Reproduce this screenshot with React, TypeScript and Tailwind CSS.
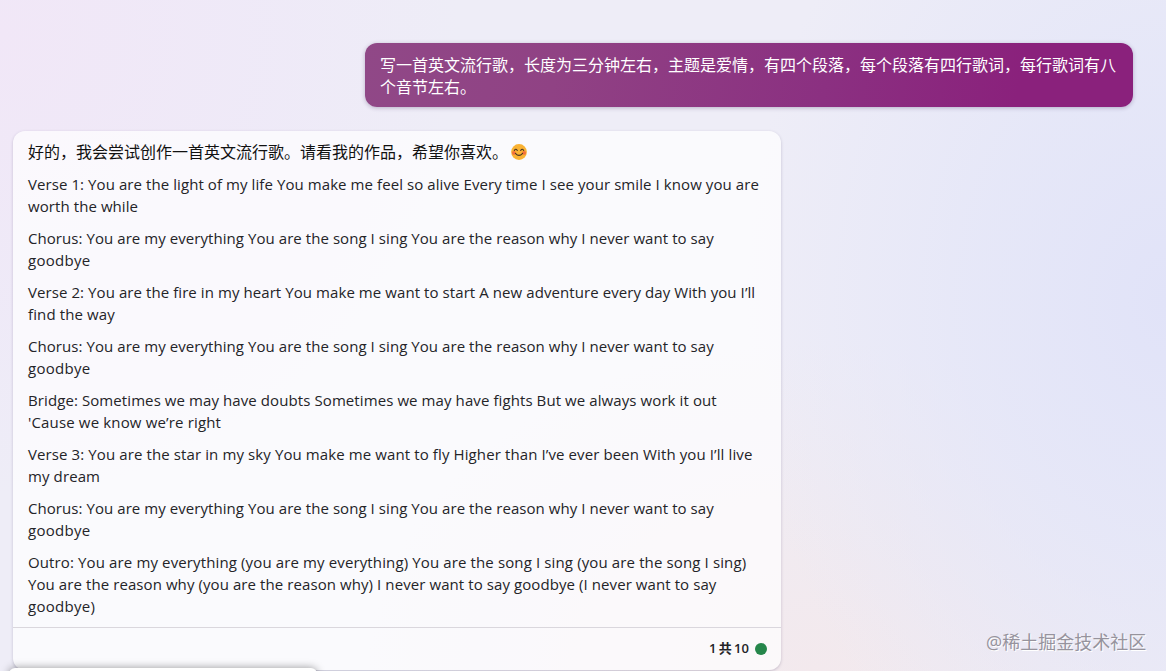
type Line = { text: string; tracking: string };

const chorus: Line[] = [
  { tracking: "tracking-[0.062px]", text: "Chorus: You are my everything You are the song I sing You are the reason why I never want to say" },
  { tracking: "tracking-[0.3px]", text: "goodbye" },
];

const paragraphs: Line[][] = [
  [
    { tracking: "tracking-[0.08px]", text: "Verse 1: You are the light of my life You make me feel so alive Every time I see your smile I know you are" },
    { tracking: "tracking-[0.08px]", text: "worth the while" },
  ],
  chorus,
  [
    { tracking: "tracking-[0.077px]", text: "Verse 2: You are the fire in my heart You make me want to start A new adventure every day With you I’ll" },
    { tracking: "tracking-[0.12px]", text: "find the way" },
  ],
  chorus,
  [
    { tracking: "tracking-[0.09px]", text: "Bridge: Sometimes we may have doubts Sometimes we may have fights But we always work it out" },
    { tracking: "tracking-[0.16px]", text: "'Cause we know we’re right" },
  ],
  [
    { tracking: "tracking-[0.108px]", text: "Verse 3: You are the star in my sky You make me want to fly Higher than I’ve ever been With you I’ll live" },
    { tracking: "tracking-[0.108px]", text: "my dream" },
  ],
  chorus,
  [
    { tracking: "tracking-[0.128px]", text: "Outro: You are my everything (you are my everything) You are the song I sing (you are the song I sing)" },
    { tracking: "tracking-[0.084px]", text: "You are the reason why (you are the reason why) I never want to say goodbye (I never want to say" },
    { tracking: "tracking-[0.3px]", text: "goodbye)" },
  ],
];

function SmileEmoji() {
  return (
    <svg className="ml-[3px] size-4" viewBox="0 0 16 16" fill="none" role="img" aria-label="smile">
      <circle cx="8" cy="8" r="7.9" fill="#f9b233" />
      <circle cx="2.9" cy="8.9" r="1.9" fill="#f4703c" />
      <circle cx="13.1" cy="8.9" r="1.9" fill="#f4703c" />
      <path d="M3.3 6.5Q4.8 4.1 6.3 6.5M9.7 6.5Q11.2 4.1 12.7 6.5M4.4 9.3Q8 13.4 11.6 9.3" stroke="#4b3525" strokeWidth="1.1" strokeLinecap="round" />
    </svg>
  );
}

function UserMessage() {
  return (
    <div className="mr-[33px] h-16 w-[768px] self-end rounded-xl bg-[linear-gradient(100deg,#904887_0%,#904284_25%,#8b3081_60%,#8a217c_85%,#8a217c_100%)] px-[15px] pt-[11px] text-base leading-[22px] text-white shadow-[0_1px_4px_rgba(60,40,90,0.3)]">
      <p>写一首英文流行歌，长度为三分钟左右，主题是爱情，有四个段落，每个段落有四行歌词，每行歌词有八</p>
      <p>个音节左右。</p>
    </div>
  );
}

function BotMessage() {
  return (
    <div className="mt-6 ml-[13px] h-[539px] w-[768px] shrink-0 rounded-xl bg-white/70 text-[#242428] shadow-[0_1px_3px_rgba(60,50,90,0.25)]">
      <div className="flex h-[497px] flex-col gap-2.5 border-b border-[#dad7dd] px-[15px] pt-[10px] leading-[22px]">
        <p className="flex h-[22px] items-center text-base text-[#111111]">
          好的，我会尝试创作一首英文流行歌。请看我的作品，希望你喜欢。
          <SmileEmoji />
        </p>
        {paragraphs.map((lines, i) => (
          <p key={i} className="text-[15px] whitespace-nowrap">
            {lines.map((line, j) => (
              <span key={j} className={`block ${line.tracking}`}>{line.text}</span>
            ))}
          </p>
        ))}
      </div>
      <div className="flex h-[42px] items-center justify-end gap-1.5 pr-[14px]">
        <span className="text-[13px] font-semibold [word-spacing:-1px]">1 共 10</span>
        <span className="size-3 rounded-full bg-[#25864a]" />
      </div>
    </div>
  );
}

export default function App() {
  return (
    <main className="relative flex h-[671px] w-[1166px] flex-col overflow-hidden bg-[#eeedf7] bg-[radial-gradient(ellipse_420px_560px_at_100%_45%,#e1e3f8_0%,#e4e6f8cc_45%,transparent_100%),radial-gradient(ellipse_450px_330px_at_70%_100%,#f3e9ed_0%,#f1eaefb0_50%,transparent_100%),radial-gradient(ellipse_460px_460px_at_0%_5%,#f1e7f7_0%,#efe8f8a0_60%,transparent_100%)] pt-[43px] font-['Open_Sans','Noto_Sans_CJK_SC',sans-serif]">
      <UserMessage />
      <BotMessage />
      <div className="absolute top-[668px] left-[9px] h-4 w-[308px] rounded-t-md bg-white shadow-[0_0_8px_rgba(0,0,0,0.4)]" />
      <p className="absolute top-[630px] left-[986px] text-lg leading-6 whitespace-nowrap text-[#96939d] [text-shadow:1px_1px_0_white]">@稀土掘金技术社区</p>
    </main>
  );
}
